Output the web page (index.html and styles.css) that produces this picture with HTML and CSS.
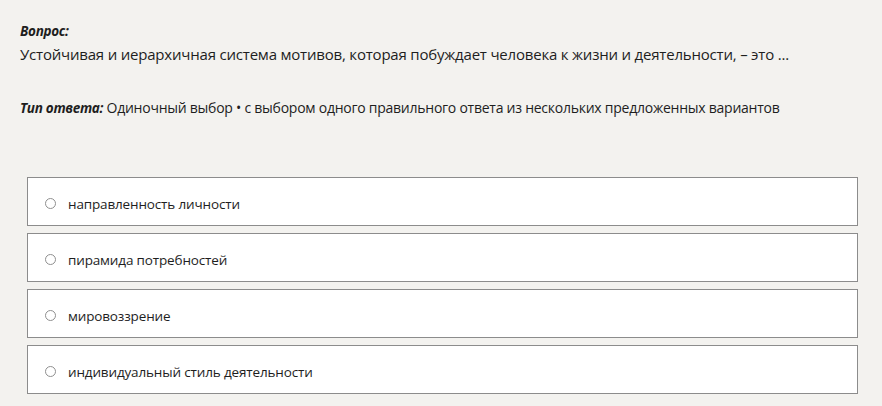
FILE: index.html
```html
<!DOCTYPE html>
<html lang="ru">
<head>
    <meta charset="UTF-8">
    <title>Вопрос</title>
    <link rel="stylesheet" href="styles.css">
</head>
<body>
    <div class="question">
        <div class="label">Вопрос:</div>
        <div class="question-text">Устойчивая и иерархичная система мотивов, которая побуждает человека к жизни и деятельности, – это ...</div>
    </div>
    <div class="answer-type">
        <span class="label">Тип ответа:</span> Одиночный выбор • с выбором одного правильного ответа из нескольких предложенных вариантов
    </div>
    <div class="options">
        <label class="option"><span class="radio"></span>направленность личности</label>
        <label class="option"><span class="radio"></span>пирамида потребностей</label>
        <label class="option"><span class="radio"></span>мировоззрение</label>
        <label class="option"><span class="radio"></span>индивидуальный стиль деятельности</label>
    </div>
</body>
</html>
```

FILE: styles.css
```css
body {
    margin: 0;
    padding: 22px 20px 0 20px;
    background-color: #f3f2ef;
    font-family: "Open Sans", sans-serif;
    color: #1e1e1e;
}

.label {
    font-weight: bold;
    font-style: italic;
    font-size: 13.5px;
    letter-spacing: -0.3px;
}

.question-text {
    margin-top: 4px;
    font-size: 15px;
    letter-spacing: -0.2px;
}

.answer-type {
    margin-top: 34px;
    font-size: 14px;
    letter-spacing: -0.25px;
}

.options {
    display: flex;
    flex-direction: column;
    gap: 7px;
    margin: 60px 4px 0 7px;
}

.option {
    display: flex;
    align-items: center;
    height: 43px;
    padding: 4px 0 0 17px;
    background-color: #fff;
    border: 1px solid #8c8c8c;
    font-size: 13.5px;
    letter-spacing: -0.15px;
}

.radio {
    width: 9px;
    height: 9px;
    border: 1px solid #8f8f8f;
    border-radius: 50%;
    margin-right: 12px;
}
```
